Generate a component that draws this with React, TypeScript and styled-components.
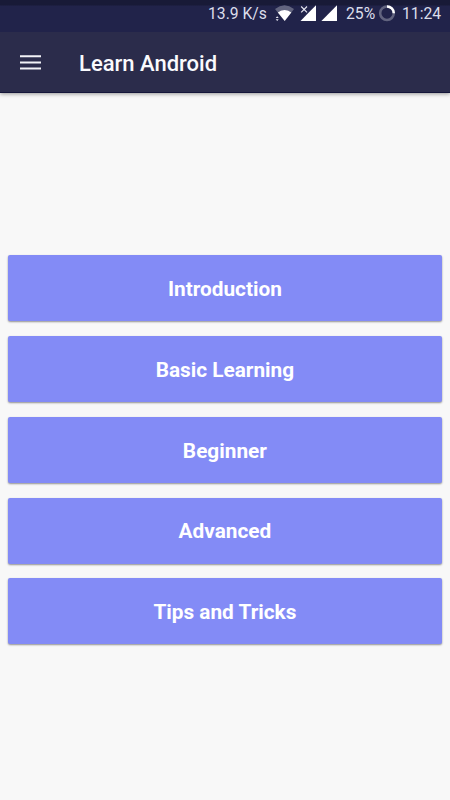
import React from "react";
import styled, { createGlobalStyle } from "styled-components";

const GlobalStyle = createGlobalStyle`
  * { box-sizing: border-box; }
  body { margin: 0; background: #f8f8f8; font-family: Roboto, sans-serif; }
`;

const Screen = styled.div`
  display: flex;
  flex-direction: column;
  width: 450px;
  height: 800px;
  overflow: hidden;
  background: #f8f8f8;
`;

const Header = styled.header`
  flex: none;
  border-bottom: 1px solid #15163a;
  box-shadow: 0 1px 4px rgba(0, 0, 0, 0.4);
`;

const StatusBar = styled.div`
  display: flex;
  align-items: flex-start;
  height: 32px;
  padding: 0 9px 0 208px;
  background: linear-gradient(#181a37 0 5px, #21234a 6px);
  color: #dcdeea;
`;

const StatusText = styled.span<{ $width: number; $gap: number }>`
  flex: none;
  width: ${(p) => p.$width}px;
  margin-right: ${(p) => p.$gap}px;
  font-size: 15.7px;
  line-height: 28px;
  white-space: nowrap;
`;

const StatusIcon = styled.svg<{ $gap: number }>`
  flex: none;
  display: block;
  margin-top: 5px;
  margin-right: ${(p) => p.$gap}px;
`;

const AppBar = styled.div`
  display: flex;
  align-items: center;
  gap: 38px;
  height: 60px;
  padding: 2px 20px 0;
  background: #2b2c4b;
`;

const MenuButton = styled.button`
  width: 21px;
  height: 16px;
  padding: 0;
  border: 0;
  background: none;
  svg { display: block; }
`;

const Title = styled.h1`
  margin: 0;
  padding-top: 2px;
  color: #fafafd;
  font-size: 22px;
  line-height: 30px;
  font-weight: 500;
`;

const Topics = styled.main`
  flex: 1;
  display: flex;
  flex-direction: column;
  gap: 14.8px;
  padding: 162.2px 7.8px 0 7.6px;
`;

const TopicButton = styled.button`
  flex: none;
  height: 66px;
  padding: 1.6px 0 0;
  border: 0;
  border-radius: 2px;
  background: #838bf6;
  box-shadow: 0 1px 2px rgba(0, 0, 0, 0.42);
  color: #fff;
  font: 700 20.8px/26px Roboto, sans-serif;
`;

const topics = ["Introduction", "Basic Learning", "Beginner", "Advanced", "Tips and Tricks"];

export default function App() {
  return (
    <Screen>
      <GlobalStyle />
      <Header>
        <StatusBar>
          <StatusText $width={59} $gap={8}>13.9 K/s</StatusText>
          <StatusIcon $gap={6} width="19" height="17" viewBox="0 0 19 17">
            <path d="M0 4Q9.5-3.4 19 4L9.7 16Z" fill="#21234a" />
            <path d="M0 4Q9.5-3.4 19 4L16.4 7.4Q9.5 2.8 2.8 7.4Z" fill="#62647f" />
            <path d="M2.8 7.4Q9.5 2.8 16.4 7.4L9.7 16Z" fill="#fff" />
            <path d="M.7 13 2.2 11.2l1.5 1.8zM.7 14.3l1.5 1.8 1.5-1.8z" fill="#e8e8f2" />
          </StatusIcon>
          <StatusIcon $gap={5} width="16" height="16" viewBox="0 0 16 16">
            <path d="M16 .3V16H.5L8.5 7.8Z" fill="#fff" />
            <path d="M0 0H8V8H0z" fill="#21234a" />
            <path d="m1.2 1.5 5.8 5.8M7 1.5 1.2 7.3" stroke="#e4e4ef" strokeWidth="1.2" />
          </StatusIcon>
          <StatusIcon $gap={9} width="16" height="16" viewBox="0 0 16 16">
            <path d="M16 .3V16H.4Z" fill="#fff" />
          </StatusIcon>
          <StatusText $width={29} $gap={4}>25%</StatusText>
          <StatusIcon $gap={6} width="17" height="17" viewBox="0 0 17 17">
            <circle cx="8" cy="8.2" r="6.8" fill="none" stroke="#62647f" strokeWidth="2.5" />
            <path d="M8 1.4A6.8 6.8 0 0 1 14.8 8.2" fill="none" stroke="#fff" strokeWidth="2.5" />
          </StatusIcon>
          <StatusText $width={39} $gap={0}>11:24</StatusText>
        </StatusBar>
        <AppBar>
          <MenuButton aria-label="Open menu">
            <svg width="21" height="16" viewBox="0 0 21 16">
              <path d="M0 1.2h21M0 7.4h21M0 13.6h21" stroke="#f2f2f7" strokeWidth="2" />
            </svg>
          </MenuButton>
          <Title>Learn Android</Title>
        </AppBar>
      </Header>
      <Topics>
        {topics.map((topic) => (
          <TopicButton key={topic}>{topic}</TopicButton>
        ))}
      </Topics>
    </Screen>
  );
}
